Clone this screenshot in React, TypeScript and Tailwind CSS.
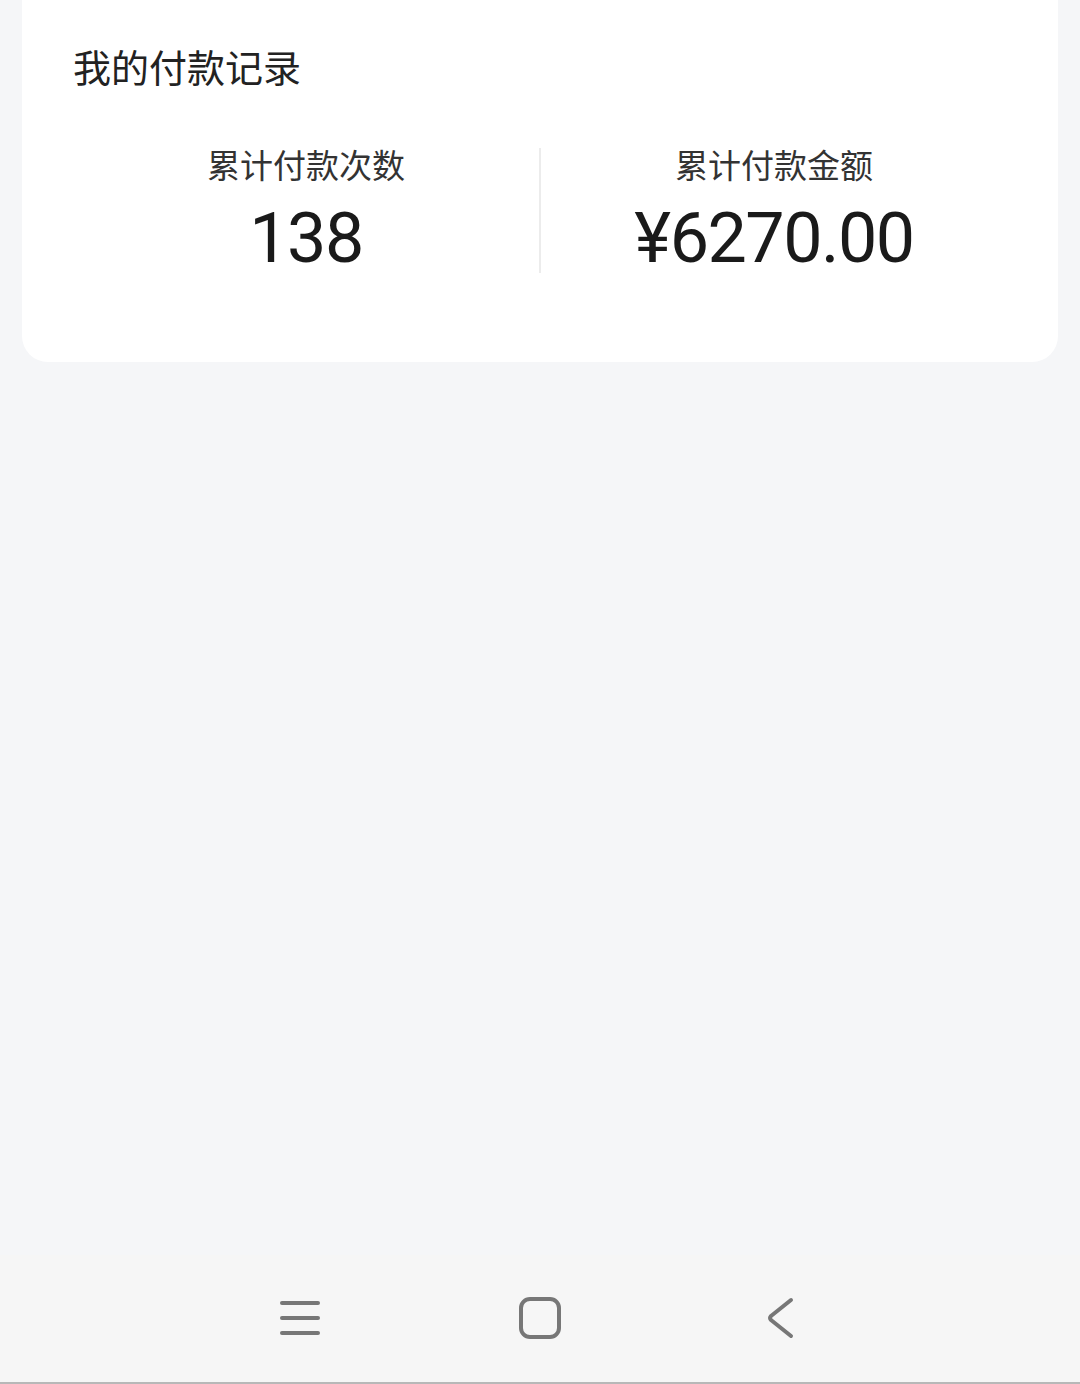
import React from "react";

const cjk = { fontFamily: '"Noto Sans CJK SC", "Noto Sans", sans-serif' };
const num = { fontFamily: 'Roboto, "Noto Sans", sans-serif' };

export default function App() {
  return (
    <div className="flex h-[1384px] w-[1080px] flex-col bg-[#f5f6f8]">
      <div className="mx-[22px] h-[362px] rounded-b-[26px] bg-white px-[51px] pt-[47px]">
        <div className="text-[38px] leading-[38px] text-[#222]" style={cjk}>
          我的付款记录
        </div>
        <div className="mt-[63px] flex">
          <div className="flex flex-1 flex-col items-center">
            <div className="text-[33px] leading-[33px] text-[#333]" style={cjk}>
              累计付款次数
            </div>
            <div
              className="mt-[22px] text-[70px] leading-[70px] tracking-[-1.5px] text-[#1a1a1a]"
              style={num}
            >
              138
            </div>
          </div>
          <div className="w-[2px] bg-[#ececec]" />
          <div className="flex flex-1 flex-col items-center">
            <div className="text-[33px] leading-[33px] text-[#333]" style={cjk}>
              累计付款金额
            </div>
            <div
              className="mt-[22px] text-[70px] leading-[70px] tracking-[-1.5px] text-[#1a1a1a]"
              style={num}
            >
              ¥6270.00
            </div>
          </div>
        </div>
      </div>
      <div className="flex-1" />
      <div className="flex h-[129px] items-center justify-center border-b-2 border-[#b8b8b8] bg-[#f6f6f6] pb-[2px]">
        <div className="flex w-[240px] justify-center">
          <svg width="40" height="36" viewBox="0 0 40 36" fill="none" stroke="#777" strokeWidth="4" strokeLinecap="round">
            <line x1="2" y1="3" x2="38" y2="3" />
            <line x1="2" y1="18" x2="38" y2="18" />
            <line x1="2" y1="33" x2="38" y2="33" />
          </svg>
        </div>
        <div className="flex w-[240px] justify-center">
          <svg width="42" height="42" viewBox="0 0 42 42" fill="none" stroke="#777" strokeWidth="4">
            <rect x="2" y="2" width="38" height="38" rx="9" />
          </svg>
        </div>
        <div className="flex w-[240px] justify-center">
          <svg width="28" height="42" viewBox="0 0 28 42" fill="none" stroke="#777" strokeWidth="4" strokeLinecap="round" strokeLinejoin="round">
            <path d="M25 3 L5 19 Q3 21 5 23 L25 39" />
          </svg>
        </div>
      </div>
    </div>
  );
}
